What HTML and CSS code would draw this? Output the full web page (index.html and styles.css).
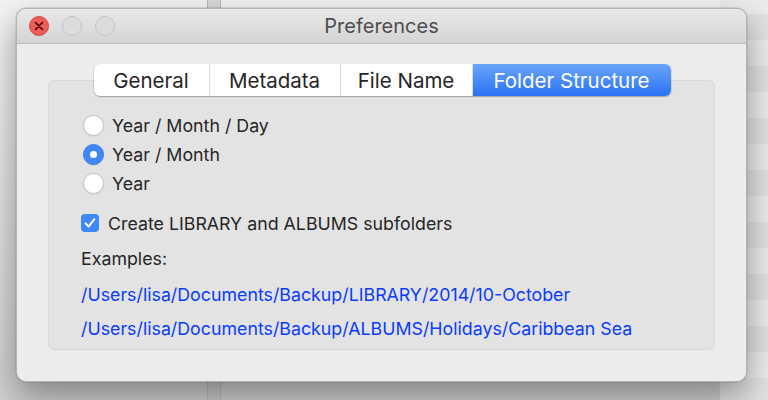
FILE: index.html
```html
<!DOCTYPE html>
<html>
<head>
<meta charset="utf-8">
<link rel="stylesheet" href="styles.css">
</head>
<body>
<div class="desktop">
  <div class="window">
    <div class="titlebar">
      <div class="lights">
        <span class="light close">
          <svg viewBox="0 0 20 20" width="20" height="20"><path d="M6.5 6.5 L13.5 13.5 M13.5 6.5 L6.5 13.5" stroke="#4d0000" stroke-width="1.6" stroke-linecap="round"/></svg>
        </span>
        <span class="light"></span>
        <span class="light"></span>
      </div>
      <div class="title">Preferences</div>
    </div>
    <div class="content">
      <div class="tabs">
        <div class="tab t1">General</div>
        <div class="tab t2">Metadata</div>
        <div class="tab t3">File Name</div>
        <div class="tab t4 active">Folder Structure</div>
      </div>
      <div class="box">
        <div class="radios">
          <label class="row"><span class="radio"></span><span>Year / Month / Day</span></label>
          <label class="row"><span class="radio on"></span><span>Year / Month</span></label>
          <label class="row"><span class="radio"></span><span>Year</span></label>
        </div>
        <label class="row check-row"><span class="check"><svg viewBox="0 0 18 18" width="18" height="18"><path d="M4.6 9.4 L7.6 12.6 L13.4 5.2" fill="none" stroke="#fff" stroke-width="2" stroke-linecap="round" stroke-linejoin="round"/></svg></span><span>Create LIBRARY and ALBUMS subfolders</span></label>
        <div class="examples">Examples:</div>
        <div class="link">/Users/lisa/Documents/Backup/LIBRARY/2014/10-October</div>
        <div class="link">/Users/lisa/Documents/Backup/ALBUMS/Holidays/Caribbean Sea</div>
      </div>
    </div>
  </div>
</div>
</body>
</html>
```

FILE: styles.css
```css
html, body {
  margin: 0;
  padding: 0;
}
body {
  width: 768px;
  height: 400px;
  overflow: hidden;
  font-family: Inter, "Noto Sans", sans-serif;
  background:
    linear-gradient(to right, transparent 207px, #b9b9b9 207px, #b9b9b9 208px, rgba(200,200,200,0.6) 208px, rgba(200,200,200,0.6) 220px, #b9b9b9 220px, #b9b9b9 221px, transparent 221px),
    repeating-linear-gradient(to bottom, #ececec 0px, #ececec 14px, #e2e2e2 14px, #e2e2e2 40px, #ececec 40px, #ececec 52px),
    linear-gradient(to bottom, #f4f4f4, #d0d0d0);
  background-size: 768px 400px, 48px 400px, 720px 400px;
  background-position: 0 0, 720px 0, 0 0;
  background-repeat: no-repeat;
}
.desktop {
  padding: 8px 0 0 16px;
}
.window {
  width: 731px;
  height: 374px;
  box-sizing: border-box;
  border-radius: 10px;
  background: #ececec;
  border: 1px solid #b4b4b4;
  box-shadow: 0 14px 34px rgba(0,0,0,0.38), 0 0 0 0.5px rgba(0,0,0,0.15);
  display: flex;
  flex-direction: column;
  overflow: hidden;
}
.titlebar {
  height: 35px;
  flex: none;
  box-sizing: border-box;
  background: linear-gradient(to bottom, #e9e9e9, #d4d4d4);
  border-bottom: 1px solid #bdbdbd;
  display: grid;
  grid-template-columns: 1fr;
  align-items: center;
}
.lights, .title {
  grid-row: 1;
  grid-column: 1;
}
.lights {
  display: flex;
  gap: 13px;
  padding-left: 12px;
  align-self: center;
}
.light {
  width: 20px;
  height: 20px;
  box-sizing: border-box;
  border-radius: 50%;
  border: 1px solid #c4c4c4;
  background: #dcdcdc;
  display: block;
}
.light.close {
  background: #ee5d58;
  border-color: #d8473f;
}
.light svg {
  display: block;
  margin: -1px;
}
.title {
  text-align: center;
  font-size: 20px;
  color: #4d4d4d;
  padding-left: 0px;
}
.content {
  padding: 20px 31px 31px 31px;
  display: flex;
  flex-direction: column;
  flex: 1;
}
.tabs {
  align-self: center;
  display: flex;
  height: 32px;
  box-sizing: border-box;
  background: #fff;
  border-radius: 6px;
  box-shadow: 0 0.5px 0 0.5px rgba(0,0,0,0.12), 0 1px 1.5px rgba(0,0,0,0.18);
  position: relative;
  z-index: 1;
  margin-left: 1px;
}
.tab {
  font-size: 20.5px;
  color: #262626;
  display: flex;
  align-items: center;
  justify-content: center;
  border-right: 1px solid #dadada;
}
.t1 { width: 115px; }
.t2 { width: 130px; }
.t3 { width: 131px; }
.t4 { width: 198px; }
.tab.active {
  border-right: none;
  color: #fff;
  background: linear-gradient(to bottom, #6aa5f9, #2a72f5);
  border-radius: 0 6px 6px 0;
}
.box {
  margin-top: -16px;
  flex: 1;
  background: #e3e3e3;
  border: 1px solid #d9d9d9;
  border-radius: 6px;
  padding: 30px 30px 0 32px;
  display: flex;
  flex-direction: column;
  color: #262626;
  font-size: 17.8px;
}
.row {
  display: flex;
  align-items: center;
  height: 29px;
}
.radio {
  width: 21px;
  height: 21px;
  box-sizing: border-box;
  border-radius: 50%;
  background: #fff;
  border: 1px solid #c4c4c4;
  box-shadow: 0 0.5px 1px rgba(0,0,0,0.12);
  margin: 0 8px 0 2px;
  display: flex;
  align-items: center;
  justify-content: center;
  flex: none;
}
.radio.on {
  background: #3d87f6;
  border-color: #3a7fe8;
}
.radio.on::after {
  content: "";
  width: 7px;
  height: 7px;
  border-radius: 50%;
  background: #fff;
}
.check-row {
  margin-top: 11px;
  height: 28px;
}
.check {
  width: 18px;
  height: 18px;
  border-radius: 4px;
  background: #3d87f6;
  margin-right: 9px;
  flex: none;
}
.check svg { display: block; }
.examples {
  margin-top: 8px;
  height: 28px;
  line-height: 28px;
}
.link {
  color: #0a3bff;
  height: 34px;
  line-height: 34px;
}
.examples + .link {
  margin-top: 5px;
}
```
